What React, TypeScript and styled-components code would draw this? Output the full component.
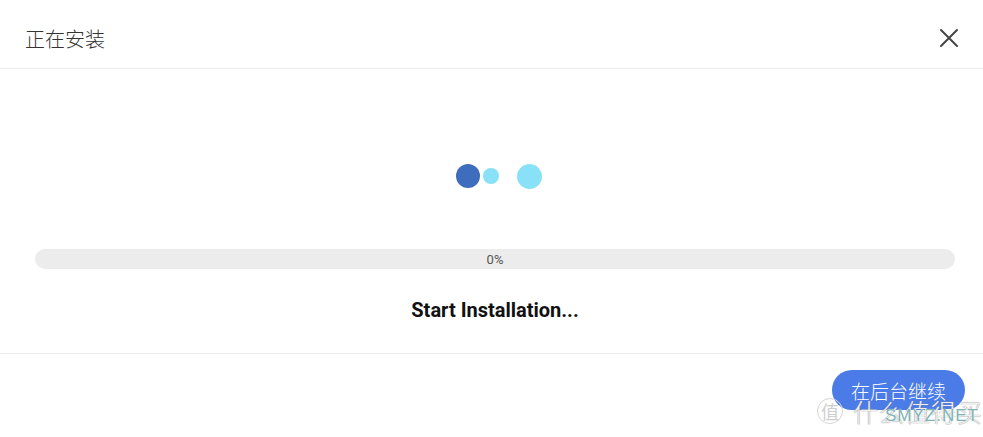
import styled, { createGlobalStyle } from "styled-components";

const GlobalStyle = createGlobalStyle`
  html, body {
    margin: 0;
    padding: 0;
    background: #ffffff;
  }
  body {
    font-family: Roboto, "Noto Sans CJK SC", sans-serif;
  }
`;

const Dialog = styled.div`
  position: relative;
  width: 983px;
  height: 437px;
  overflow: hidden;
  background: #fff;
  display: flex;
  flex-direction: column;
`;

const Header = styled.div`
  height: 69px;
  box-sizing: border-box;
  border-bottom: 1px solid #ececec;
  display: flex;
  align-items: center;
  justify-content: space-between;
  padding: 8px 24px 0 25px;
  flex-shrink: 0;
`;

const Title = styled.h1`
  margin: 0;
  font-family: "Noto Sans CJK SC", sans-serif;
  font-size: 20px;
  font-weight: 300;
  color: #333;
`;

const CloseButton = styled.button`
  width: 20px;
  height: 20px;
  padding: 0;
  border: none;
  background: none;
  display: flex;
  cursor: pointer;
`;

const Body = styled.div`
  padding: 94px 28px 30px 35px;
  border-bottom: 1px solid #ececec;
  display: flex;
  flex-direction: column;
  align-items: stretch;
`;

const Loader = styled.div`
  height: 26px;
  display: flex;
  align-items: center;
  justify-content: center;
  padding-left: 7px;
`;

const Dot = styled.span<{ $size: number; $color: string; $gap: number }>`
  width: ${(p) => p.$size}px;
  height: ${(p) => p.$size}px;
  border-radius: 50%;
  background: ${(p) => p.$color};
  margin-left: ${(p) => p.$gap}px;
`;

const Track = styled.div`
  margin-top: 60px;
  height: 20px;
  border-radius: 10px;
  background: #ececec;
  position: relative;
  overflow: hidden;
  display: flex;
  align-items: center;
  justify-content: center;
`;

const Fill = styled.div`
  position: absolute;
  left: 0;
  top: 0;
  bottom: 0;
  background: #4a7be6;
`;

const Percent = styled.span`
  position: relative;
  font-size: 13px;
  color: #555;
`;

const Status = styled.p`
  margin: 28px 0 0;
  text-align: center;
  font-size: 20px;
  line-height: 26px;
  font-weight: 700;
  color: #111;
`;

const Footer = styled.div`
  display: flex;
  justify-content: flex-end;
  padding: 16px 18px 0;
`;

const PrimaryButton = styled.button`
  width: 133px;
  height: 40px;
  border: none;
  border-radius: 20px;
  background: #4a7be6;
  color: #fff;
  font-family: "Noto Sans CJK SC", sans-serif;
  font-size: 19px;
  font-weight: 300;
  cursor: pointer;
`;

const Watermark = styled.div`
  position: absolute;
  left: 817px;
  top: 393px;
  display: flex;
  align-items: center;
  gap: 10px;
  pointer-events: none;
`;

const WmBadge = styled.span`
  width: 24px;
  height: 24px;
  border: 1.5px solid #d6d6d6;
  border-radius: 50%;
  display: flex;
  align-items: center;
  justify-content: center;
  font-family: "Noto Sans CJK SC", sans-serif;
  font-size: 18px;
  color: #cfcfcf;
`;

const WmTextBlock = styled.div`
  position: relative;
  font-family: "Noto Sans CJK SC", sans-serif;
  font-size: 25px;
  font-weight: 300;
  color: rgba(255, 255, 255, 0.85);
  text-shadow: 0 0 1px #999, 0 0 1px #999;
  letter-spacing: 1px;
`;

const WmDomain = styled.span`
  position: absolute;
  left: 32px;
  top: 13px;
  font-family: "Liberation Sans", sans-serif;
  font-size: 17px;
  color: #7fb3b5;
  text-shadow: 0 0 1px #fff;
`;

export default function App() {
  const progress = 0;
  return (
    <>
      <GlobalStyle />
      <Dialog>
        <Header>
          <Title>正在安装</Title>
          <CloseButton aria-label="close">
            <svg width="20" height="20" viewBox="0 0 20 20">
              <path d="M2 2 L18 18 M18 2 L2 18" stroke="#444" strokeWidth="2" strokeLinecap="round" />
            </svg>
          </CloseButton>
        </Header>
        <Body>
          <Loader>
            <Dot $size={24} $color="#3e6dbd" $gap={0} />
            <Dot $size={16} $color="#88e1f7" $gap={3} />
            <Dot $size={25} $color="#88e1f7" $gap={18} />
          </Loader>
          <Track>
            <Fill style={{ width: `${progress}%` }} />
            <Percent>{progress}%</Percent>
          </Track>
          <Status>Start Installation...</Status>
        </Body>
        <Footer>
          <PrimaryButton>在后台继续</PrimaryButton>
        </Footer>
        <Watermark>
          <WmBadge>值</WmBadge>
          <WmTextBlock>
            什么值得买
            <WmDomain>SMYZ.NET</WmDomain>
          </WmTextBlock>
        </Watermark>
      </Dialog>
    </>
  );
}
